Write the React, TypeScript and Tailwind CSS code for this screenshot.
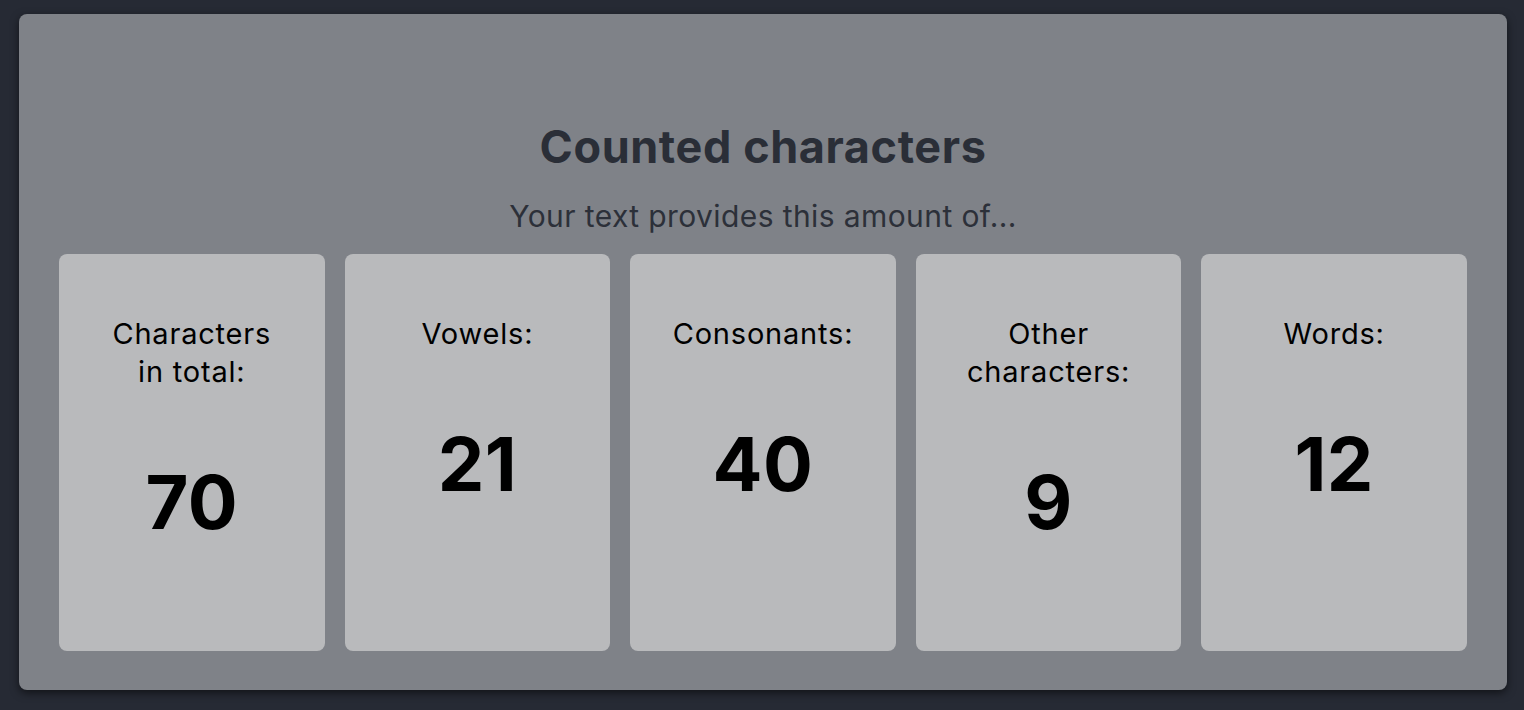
import React from "react";

const stats: { label: React.ReactNode; value: string }[] = [
  { label: (<>Characters<br />in total:</>), value: "70" },
  { label: "Vowels:", value: "21" },
  { label: "Consonants:", value: "40" },
  { label: (<>Other<br />characters:</>), value: "9" },
  { label: "Words:", value: "12" },
];

export default function App() {
  return (
    <div
      className="min-h-[710px] w-full bg-[#262a34] pt-[14px]"
      style={{ fontFamily: "Inter, 'Noto Sans', sans-serif" }}
    >
      <div className="ml-[19px] w-[1488px] h-[676px] rounded-[8px] bg-[#7f8288] shadow-[0_3px_8px_rgba(0,0,0,0.55)] px-[40px] pt-[107px] flex flex-col items-center">
        <h1 className="text-[45px] leading-[52px] font-bold text-[#2a2e37] tracking-[0.6px]">
          Counted characters
        </h1>
        <p className="mt-[25px] text-[30px] leading-[36px] text-[#2c3039] tracking-[0.4px]">
          Your text provides this amount of...
        </p>
        <div className="mt-[20px] grid w-full grid-cols-5 gap-[20px]">
          {stats.map((s, i) => (
            <div
              key={i}
              className="h-[397px] rounded-[8px] bg-[#b9babc] pt-[61px] flex flex-col items-center text-center text-black"
            >
              <div className="text-[29px] leading-[38px] tracking-[0.8px]">{s.label}</div>
              <div className="mt-[74px] text-[74px] leading-none font-bold tracking-[0.5px]">{s.value}</div>
            </div>
          ))}
        </div>
      </div>
    </div>
  );
}
